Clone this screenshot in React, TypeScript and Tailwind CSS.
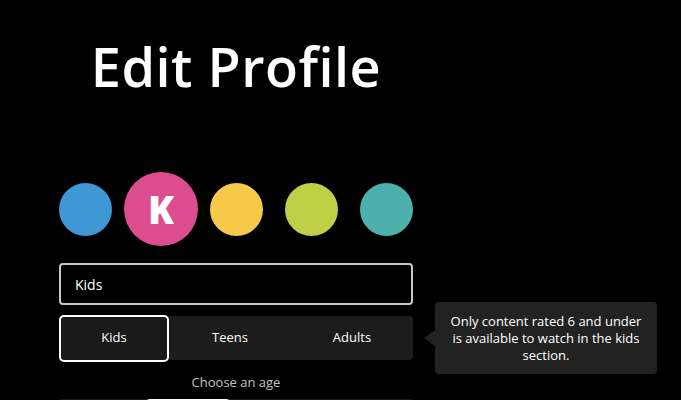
import React from "react";

const App = () => {
  return (
    <div
      className="min-h-[400px] w-full overflow-hidden bg-black text-white"
      style={{ fontFamily: '"Open Sans", "DejaVu Sans", sans-serif' }}
    >
      <div className="ml-[59px] flex w-[354px] flex-col">
        <h1 className="mt-[34px] text-center text-[54px] font-semibold leading-[64px] tracking-[0.5px]">
          Edit Profile
        </h1>

        {/* avatars */}
        <div className="mt-[74px] flex h-[74px] items-center">
          <div className="h-[53px] w-[53px] rounded-full bg-[#3f97d3]" />
          <div className="ml-[12px] flex h-[74px] w-[74px] items-center justify-center rounded-full bg-[#db4d8f]">
            <span className="text-[38px] font-extrabold leading-none">K</span>
          </div>
          <div className="ml-[12px] h-[53px] w-[53px] rounded-full bg-[#f7c948]" />
          <div className="ml-[22px] h-[53px] w-[53px] rounded-full bg-[#c0cf45]" />
          <div className="ml-[22px] h-[53px] w-[53px] rounded-full bg-[#4eb0ad]" />
        </div>

        {/* name input */}
        <div className="mt-[17px] flex h-[42px] items-center rounded-[4px] border-2 border-[#c8c8c8] px-[14px] text-[14px] font-medium">
          Kids
        </div>

        {/* age segmented control */}
        <div className="relative mt-[11px]">
          <div className="flex h-[44px] items-center rounded-[4px] bg-[#1c1c1c] text-[13px] font-medium">
            <div className="-my-[2px] flex h-[47px] w-[110px] items-center justify-center rounded-[5px] border-2 border-white bg-[#1a1a1a]">
              Kids
            </div>
            <div className="flex flex-1 items-center justify-center">Teens</div>
            <div className="flex flex-1 items-center justify-center">Adults</div>
          </div>

          {/* tooltip */}
          <div className="absolute left-[365px] top-[-14px] flex w-[233px]">
            <div className="mt-[28px] h-0 w-0 border-y-[8px] border-r-[11px] border-y-transparent border-r-[#222222]" />
            <div className="flex h-[72px] flex-1 items-center justify-center rounded-[4px] bg-[#222222] px-[10px] text-center text-[13px] leading-[17px]">
              Only content rated 6 and under is available to watch in the kids section.
            </div>
          </div>
        </div>

        <p className="mt-[13px] text-center text-[13px] text-[#c4c4c4]">Choose an age</p>

        {/* rating segmented control */}
        <div className="mt-[6px] flex h-[44px] rounded-[4px] bg-[#1c1c1c]">
          <div className="w-[86px]" />
          <div className="h-[46px] w-[86px] rounded-[5px] border-2 border-white" />
        </div>
      </div>
    </div>
  );
};

export default App;
